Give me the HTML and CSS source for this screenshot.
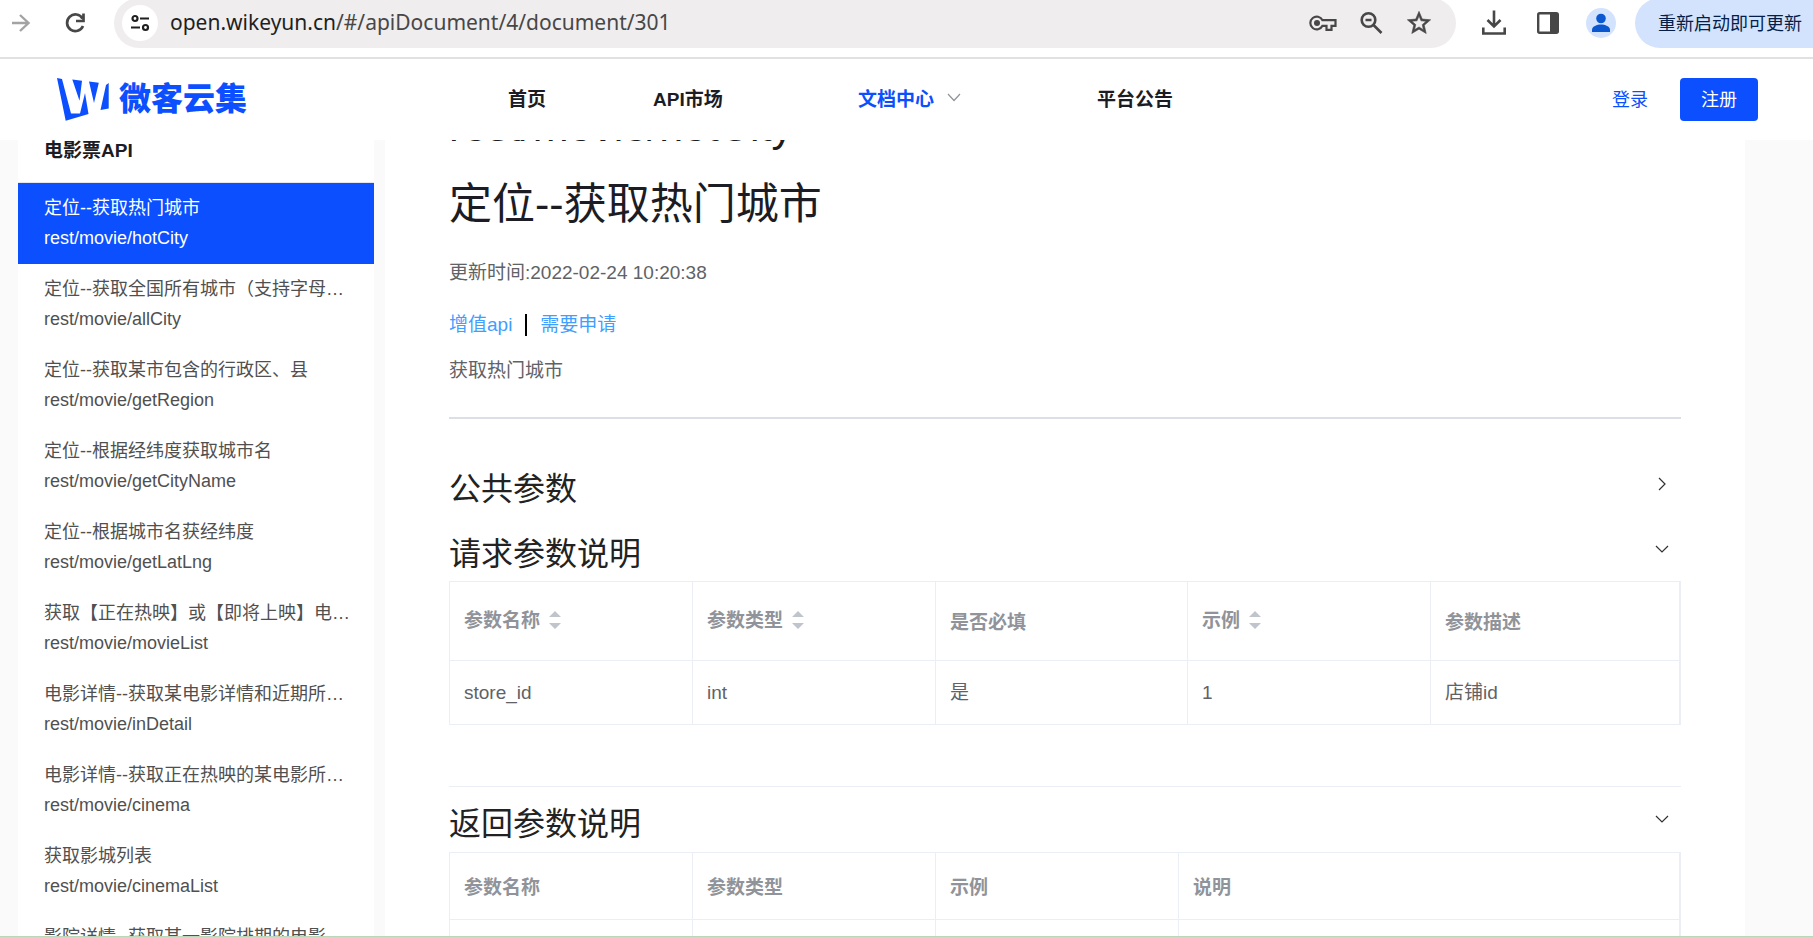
FILE: index.html
```html
<!DOCTYPE html>
<html lang="zh-CN">
<head>
<meta charset="utf-8">
<title>微客云集 - 文档中心</title>
<link rel="stylesheet" href="styles.css">
</head>
<body>
<div class="browser">
  <button class="tool forward" aria-label="前进"><svg width="24" height="24" viewBox="0 0 24 24" fill="none" stroke="#a3a3a3" stroke-width="2.4"><path d="M4 12h17M12 4l8.500 8-8.500 8"/></svg></button>
  <button class="tool reload" aria-label="重新加载"><svg width="26" height="26" viewBox="0 0 26 26" fill="none" stroke="#474747" stroke-width="2.700"><path d="M20.500 8.500A8.300 8.300 0 1 0 21 16M21.500 3.500v7.500h-7.500"/></svg></button>
  <div class="omnibox">
    <button class="site-info" aria-label="网站信息"><svg width="22" height="22" viewBox="0 0 22 22" fill="none" stroke="#1f1f1f" stroke-width="2.2"><circle cx="6" cy="6.500" r="2.500"/><path d="M11 6.500h9M2 15.500h9"/><circle cx="16.500" cy="15.500" r="2.500"/></svg></button>
    <div class="url" role="textbox" aria-label="地址"><span class="host">open.wikeyun.cn</span>/#/apiDocument/4/document/301</div>
    <button class="tool" aria-label="密码"><svg width="28" height="28" viewBox="0 0 28 28"><path d="M13.500 11.200a6.400 6.400 0 1 0 0 5.600h4v4h5v-4H26.500v-5.600z" fill="none" stroke="#474747" stroke-width="2.200"/><circle cx="8" cy="14" r="3" fill="#474747"/></svg></button>
    <button class="tool" aria-label="缩放"><svg width="28" height="28" viewBox="0 0 28 28" fill="none" stroke="#474747" stroke-width="2.600"><circle cx="11.500" cy="11" r="6.800"/><path d="M8.500 11h6M16 15.500l8.500 8.500"/></svg></button>
    <button class="tool" aria-label="收藏"><svg width="28" height="28" viewBox="0 0 24 24" fill="#474747" stroke="#474747" stroke-width=".5"><path d="M22 9.240l-7.190-.62L12 2 9.190 8.630 2 9.240l5.460 4.730L5.820 21 12 17.270 18.180 21l-1.630-7.030zM12 15.400l-3.760 2.270 1-4.280-3.320-2.880 4.380-.38L12 6.100l1.710 4.040 4.380.38-3.320 2.880 1 4.280z"/></svg></button>
  </div>
  <button class="tool" aria-label="下载"><svg width="28" height="28" viewBox="0 0 28 28" fill="none" stroke="#474747" stroke-width="2.600"><path d="M14 1.500v16M7.500 11l6.500 6.500 6.500-6.500M3.300 18.500v6h21.400v-6"/></svg></button>
  <button class="tool" aria-label="侧边栏"><svg width="28" height="28" viewBox="0 0 28 28"><rect x="4.200" y="4.200" width="19.600" height="19.600" rx="1.500" fill="none" stroke="#474747" stroke-width="2.400"/><path d="M16 4h8v20h-8z" fill="#474747"/></svg></button>
  <button class="avatar" aria-label="个人资料"><svg width="30" height="30" viewBox="0 0 30 30" fill="#0b57d0"><circle cx="15" cy="10.500" r="4.800"/><path d="M6 24v-2.500c0-3 5-5 9-5s9 2 9 5V24z"/></svg></button>
  <button class="update">重新启动即可更新</button>
</div>

<header class="site-header">
  <a class="logo" href="#">
    <svg width="52" height="43" viewBox="0 0 52 43" fill="#0b4fff"><path d="M0 0l5 1 9 34.500h9L28 15l3.500 21L8.700 42.700zM15.300 1.500l9.700 1.300-2.500 20zM32 3.500l9.800 1.200L37 25zM49 7l2.700-2v25.500L43.500 32z"/></svg>
    <span class="logo-text">微客云集</span>
  </a>
  <nav class="nav">
    <a href="#">首页</a>
    <a href="#">API市场</a>
    <a class="active" href="#">文档中心 <svg width="14" height="10" viewBox="0 0 14 10" fill="none" stroke="#909399" stroke-width="1.200"><path d="M1 1l6 6.500L13 1"/></svg></a>
    <a href="#">平台公告</a>
  </nav>
  <a class="login" href="#">登录</a>
  <button class="register">注册</button>
</header>

<div class="body">
  <aside class="sidebar">
    <h2 class="side-title">电影票API</h2>
    <a class="item current" href="#"><span>定位--获取热门城市</span><span>rest/movie/hotCity</span></a>
    <a class="item" href="#"><span>定位--获取全国所有城市（支持字母排序）</span><span>rest/movie/allCity</span></a>
    <a class="item" href="#"><span>定位--获取某市包含的行政区、县</span><span>rest/movie/getRegion</span></a>
    <a class="item" href="#"><span>定位--根据经纬度获取城市名</span><span>rest/movie/getCityName</span></a>
    <a class="item" href="#"><span>定位--根据城市名获经纬度</span><span>rest/movie/getLatLng</span></a>
    <a class="item" href="#"><span>获取【正在热映】或【即将上映】电影列表</span><span>rest/movie/movieList</span></a>
    <a class="item" href="#"><span>电影详情--获取某电影详情和近期所有影院</span><span>rest/movie/inDetail</span></a>
    <a class="item" href="#"><span>电影详情--获取正在热映的某电影所有影院</span><span>rest/movie/cinema</span></a>
    <a class="item" href="#"><span>获取影城列表</span><span>rest/movie/cinemaList</span></a>
    <a class="item" href="#"><span>影院详情--获取某一影院排期的电影</span></a>
  </aside>

  <main class="doc">
    <h1 class="path">rest/movie/hotCity</h1>
    <h1 class="title">定位--获取热门城市</h1>
    <p class="time">更新时间:2022-02-24 10:20:38</p>
    <p class="tags"><a href="#">增值api</a><i class="bar"></i><a href="#">需要申请</a></p>
    <p class="desc">获取热门城市</p>
    <hr class="rule">

    <section class="panel">
      <button class="panel-head">公共参数<svg width="16" height="16" viewBox="0 0 16 16" fill="none" stroke="#303133" stroke-width="1.200"><path d="M5 2l6 6-6 6"/></svg></button>
    </section>
    <section class="panel open">
      <button class="panel-head">请求参数说明<svg width="16" height="16" viewBox="0 0 16 16" fill="none" stroke="#303133" stroke-width="1.200"><path d="M2 5l6 6 6-6"/></svg></button>
      <table class="grid request">
        <colgroup><col class="c"><col class="c"><col class="w"><col class="c"><col></colgroup>
        <thead><tr>
          <th class="sortable">参数名称<svg class="sort" width="12" height="18" viewBox="0 0 12 18" fill="#c0c4cc"><path d="M6 0l6 6H0zM6 18l6-6H0z"/></svg></th>
          <th class="sortable">参数类型<svg class="sort" width="12" height="18" viewBox="0 0 12 18" fill="#c0c4cc"><path d="M6 0l6 6H0zM6 18l6-6H0z"/></svg></th>
          <th>是否必填</th>
          <th class="sortable">示例<svg class="sort" width="12" height="18" viewBox="0 0 12 18" fill="#c0c4cc"><path d="M6 0l6 6H0zM6 18l6-6H0z"/></svg></th>
          <th>参数描述</th>
        </tr></thead>
        <tbody><tr><td>store_id</td><td>int</td><td>是</td><td>1</td><td>店铺id</td></tr></tbody>
      </table>
    </section>
    <section class="panel">
      <button class="panel-head">返回参数说明<svg width="16" height="16" viewBox="0 0 16 16" fill="none" stroke="#303133" stroke-width="1.200"><path d="M2 5l6 6 6-6"/></svg></button>
      <table class="grid">
        <colgroup><col class="c"><col class="c"><col class="c"><col></colgroup>
        <thead><tr><th>参数名称</th><th>参数类型</th><th>示例</th><th>说明</th></tr></thead>
        <tbody><tr><td></td><td></td><td></td><td></td></tr></tbody>
      </table>
    </section>
  </main>
</div>
</body>
</html>
```
FILE: styles.css
```css
* { box-sizing: border-box; }
body {
  margin: 0;
  height: 100vh;
  display: flex;
  flex-direction: column;
  overflow: hidden;
  background: #fafafa;
  border-bottom: 1px solid #b9d8b9;
  font-family: "Liberation Sans", "Noto Sans CJK SC", sans-serif;
  font-size: 19px;
  color: #606266;
}
h1, h2, p { margin: 0; font-weight: 400; }
a { color: inherit; text-decoration: none; }
button { border: 0; padding: 0; background: none; font: inherit; color: inherit; cursor: pointer; }
svg { display: block; flex: none; }

/* Browser toolbar */
.browser {
  display: flex;
  align-items: center;
  flex: none;
  height: 59px;
  padding: 0 0 12px 8px;
  background: #fff;
  border-bottom: 2px solid #e1e1e1;
  overflow: hidden;
}
.forward { margin-right: 30px; }
.reload { margin-right: 26px; }
.omnibox {
  display: flex;
  align-items: center;
  flex: 1;
  min-width: 0;
  height: 50px;
  padding: 0 23px 0 8px;
  border-radius: 25px;
  background: #efedee;
  gap: 20px;
}
.site-info {
  display: flex;
  align-items: center;
  justify-content: center;
  width: 36px;
  height: 36px;
  border-radius: 50%;
  background: #fff;
}
.url {
  flex: 1;
  margin-left: -8px;
  padding-bottom: 2px;
  font-family: "Noto Sans", "Noto Sans CJK SC", sans-serif;
  font-size: 21px;
  white-space: nowrap;
  color: #474747;
}
.host { color: #1f1f1f; }
.omnibox + .tool { margin: 0 26px 0 24px; }
.avatar {
  margin: 0 19px 0 24px;
  border-radius: 50%;
  background: #d3e3fd;
}
.update {
  flex: none;
  width: 178px;
  height: 50px;
  padding: 0 0 2px 23px;
  border-radius: 25px 0 0 25px;
  background: #d3e3fd;
  color: #041e49;
  font-size: 18px;
  text-align: left;
}

/* Site header */
.site-header {
  display: flex;
  align-items: center;
  flex: none;
  height: 81px;
  padding: 0 55px 0 57px;
  background: #fff;
  z-index: 1;
}
.logo { display: flex; align-items: center; gap: 10px; width: 451px; color: #0b4fff; }
.logo-text { padding-bottom: 2px; font-size: 32px; line-height: 44px; font-weight: 900; }
.nav {
  display: grid;
  grid-template-columns: 145px 205px 239px auto;
  flex: 1;
  justify-content: start;
  padding-bottom: 4px;
  font-weight: 700;
  color: #1c1c24;
}
.active { display: flex; align-items: center; gap: 13px; color: #0b4fff; }
.login { margin-right: 32px; padding-bottom: 4px; font-size: 18px; color: #0b4fff; }
.register {
  width: 78px;
  height: 43px;
  padding-bottom: 4px;
  border-radius: 4px;
  background: #0b4fff;
  color: #fff;
  font-size: 18px;
}

/* Layout */
.body {
  display: flex;
  flex: 1;
  min-height: 0;
  gap: 11px;
  padding: 0 68px 0 18px;
  overflow: hidden;
}
.sidebar { width: 356px; flex: none; overflow: hidden; background: #fff; }
.side-title {
  height: 43px;
  padding-left: 26px;
  border-bottom: 1px solid #e4e7ed;
  font-size: 19px;
  line-height: 22px;
  font-weight: 700;
  color: #1c1c24;
}
.item {
  display: block;
  height: 81px;
  padding: 10px 20px 0 26px;
  font-size: 18px;
  line-height: 30px;
  color: #505050;
}
.item span {
  display: block;
  overflow: hidden;
  white-space: nowrap;
  text-overflow: ellipsis;
}
.current { background: #0b4fff; color: #fff; }

/* Document */
.doc { flex: 1; min-width: 0; padding: 0 64px; overflow: hidden; background: #fff; }
.path, .title { font-size: 43px; line-height: 64px; color: #1c1c24; }
.path { margin-top: -46px; }
.title { margin-top: 14px; }
.time { margin-top: 21px; line-height: 32px; }
.tags { display: flex; align-items: center; margin-top: 20px; line-height: 32px; color: #409eff; }
.bar { width: 2px; height: 22px; margin: 0 13px; background: #000; }
.desc { margin-top: 14px; line-height: 32px; }
.rule { height: 2px; margin: 30px 0 34px; border: 0; background: #dcdfe6; }
.panel-head {
  display: flex;
  align-items: center;
  justify-content: space-between;
  width: 100%;
  height: 65px;
  padding-right: 11px;
  font-size: 32px;
  color: #222;
}
.panel-head svg { margin-bottom: 4px; }
.open { padding-bottom: 61px; border-bottom: 1px solid #ebeef5; }
.open .panel-head { height: 63px; padding-top: 2px; }
.open + .panel .panel-head { padding-top: 2px; }
.grid {
  width: 100%;
  table-layout: fixed;
  border-collapse: separate;
  border-spacing: 0;
  border: 1px solid #ebeef5;
  border-width: 1px 1px 0 1px;
  line-height: 23px;
}
.c { width: 243px; }
.w { width: 252px; }
.grid th, .grid td {
  height: 64px;
  padding: 0 14px;
  border: 1px solid #ebeef5;
  border-width: 0 1px 1px 0;
  text-align: left;
}
.grid th { height: 67px; padding-top: 2px; color: #909399; }
.request th { height: 79px; }
.request .sortable { padding-bottom: 4px; }
.sort { display: inline-block; margin-left: 9px; vertical-align: -2px; }
```
